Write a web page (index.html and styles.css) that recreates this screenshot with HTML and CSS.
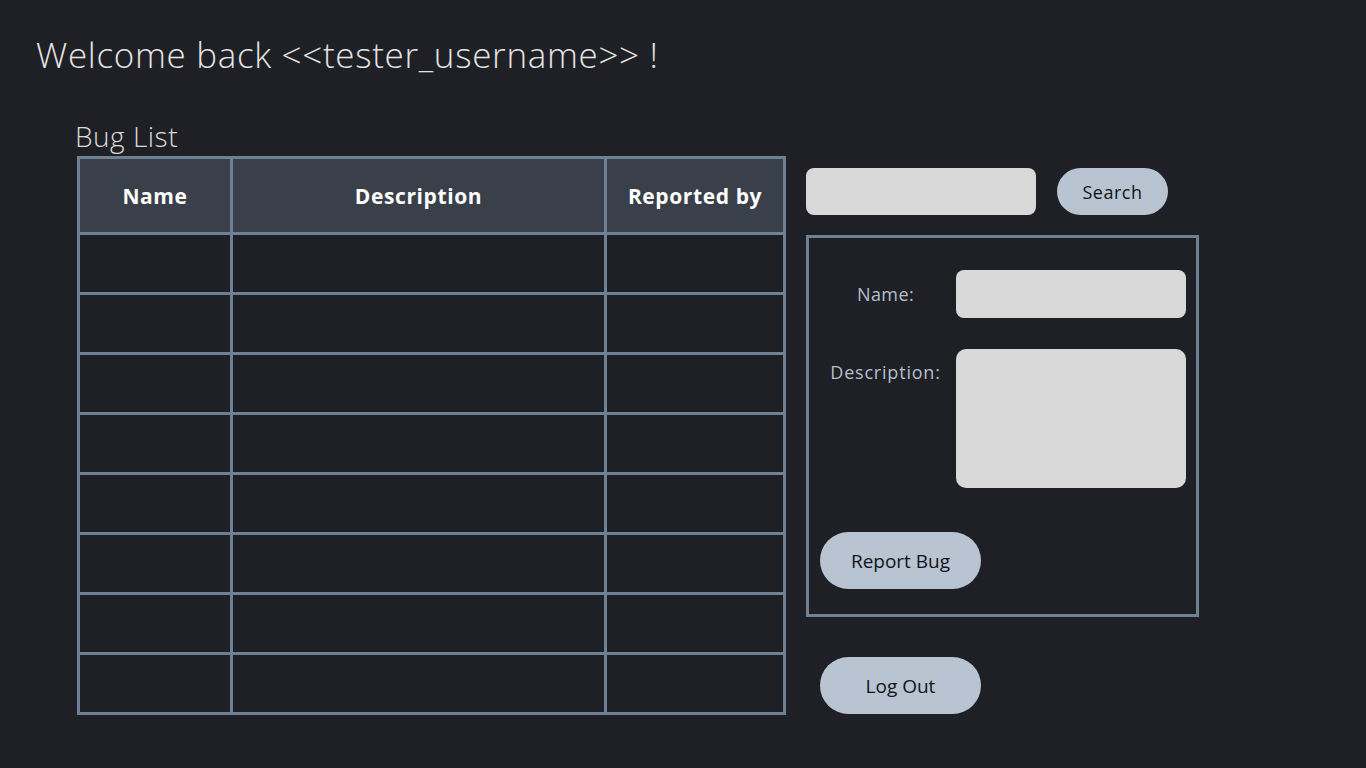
FILE: index.html
```html
<!DOCTYPE html>
<html lang="en">
<head>
<meta charset="utf-8">
<title>Bug Tracker</title>
<link rel="stylesheet" href="styles.css">
</head>
<body>
  <h1 class="welcome">Welcome back &lt;&lt;tester_username&gt;&gt; !</h1>
  <main class="main">
    <section class="bug-list">
      <h2 class="bug-list-title">Bug List</h2>
      <table class="bug-table">
        <colgroup>
          <col class="col-name">
          <col class="col-desc">
          <col class="col-rep">
        </colgroup>
        <thead>
          <tr><th>Name</th><th>Description</th><th>Reported by</th></tr>
        </thead>
        <tbody>
          <tr><td></td><td></td><td></td></tr>
          <tr><td></td><td></td><td></td></tr>
          <tr><td></td><td></td><td></td></tr>
          <tr><td></td><td></td><td></td></tr>
          <tr><td></td><td></td><td></td></tr>
          <tr><td></td><td></td><td></td></tr>
          <tr><td></td><td></td><td></td></tr>
          <tr><td></td><td></td><td></td></tr>
        </tbody>
      </table>
    </section>
    <aside class="side">
      <div class="search-row">
        <input class="search-input" type="text" aria-label="Search">
        <button class="pill-btn search-btn">Search</button>
      </div>
      <form class="report-box">
        <div class="report-grid">
          <label class="field-label label-name" for="bug-name">Name:</label>
          <input id="bug-name" class="field-input" type="text">
          <label class="field-label label-desc" for="bug-desc">Description:</label>
          <textarea id="bug-desc" class="field-textarea"></textarea>
        </div>
        <button type="button" class="pill-btn report-btn">Report Bug</button>
      </form>
      <button class="pill-btn logout-btn">Log Out</button>
    </aside>
  </main>
</body>
</html>
```

FILE: styles.css
```css
* { box-sizing: border-box; }

html, body {
  margin: 0;
  padding: 0;
  background: #1f2026;
}

body {
  font-family: "Open Sans", "Noto Sans", "Liberation Sans", sans-serif;
  width: 1366px;
  height: 768px;
  overflow: hidden;
  padding-top: 37px;
}

.welcome {
  margin: 0 0 0 36px;
  font-size: 35px;
  line-height: 1;
  font-weight: 300;
  letter-spacing: 0.68px;
  color: #e3e3e3;
  white-space: nowrap;
}

.main {
  display: flex;
  align-items: flex-start;
  padding-left: 77px;
  margin-top: 50px;
}

.bug-list-title {
  margin: 0 0 6px -2px;
  font-size: 28px;
  line-height: 1;
  font-weight: 300;
  letter-spacing: 0.5px;
  color: #dadada;
}

.bug-table {
  border-collapse: separate;
  border-spacing: 3px;
  background: #6e8094;
  table-layout: fixed;
  width: 709px;
}

.col-name { width: 150px; }
.col-desc { width: 371px; }
.col-rep { width: 176px; }

.bug-table th,
.bug-table td {
  padding: 0;
}

.bug-table th {
  height: 73px;
  background: #394049;
  color: #ffffff;
  font-size: 21px;
  font-weight: 700;
  letter-spacing: 0.6px;
  text-align: center;
}

.bug-table td {
  height: 57px;
  background: #1f2026;
}

.side {
  margin-left: 20px;
  margin-top: 46px;
  display: flex;
  flex-direction: column;
  align-items: flex-start;
}

.search-row {
  display: flex;
  gap: 21px;
}

.search-input {
  width: 230px;
  height: 47px;
  border: none;
  border-radius: 8px;
  background: #d9d9d9;
  outline: none;
}

.pill-btn {
  border: none;
  background: #b8c4d2;
  color: #111318;
  font-family: inherit;
  padding: 0;
  cursor: pointer;
}

.search-btn {
  width: 111px;
  height: 47px;
  border-radius: 24px;
  font-size: 18px;
  letter-spacing: 0.5px;
}

.report-box {
  margin: 20px 0 0 0;
  width: 393px;
  border: 3px solid #6e8094;
  padding: 32px 10px 25px 0;
}

.report-grid {
  display: grid;
  grid-template-columns: 147px 230px;
  row-gap: 31px;
}

.field-label {
  font-size: 18px;
  line-height: 1;
  color: #b4bfcc;
  text-align: center;
  padding-left: 6px;
  letter-spacing: 0.4px;
}

.label-name { align-self: center; }
.label-desc { align-self: start; padding-top: 14px; letter-spacing: 0.8px; }

.field-input {
  width: 230px;
  height: 48px;
  border: none;
  border-radius: 8px;
  background: #d9d9d9;
  outline: none;
}

.field-textarea {
  width: 230px;
  height: 139px;
  border: none;
  border-radius: 10px;
  background: #d9d9d9;
  resize: none;
  outline: none;
  display: block;
}

.report-btn,
.logout-btn {
  width: 161px;
  height: 57px;
  border-radius: 29px;
  font-size: 19px;
}

.report-btn {
  display: block;
  margin: 44px 0 0 11px;
}

.logout-btn {
  margin: 40px 0 0 14px;
}
```
